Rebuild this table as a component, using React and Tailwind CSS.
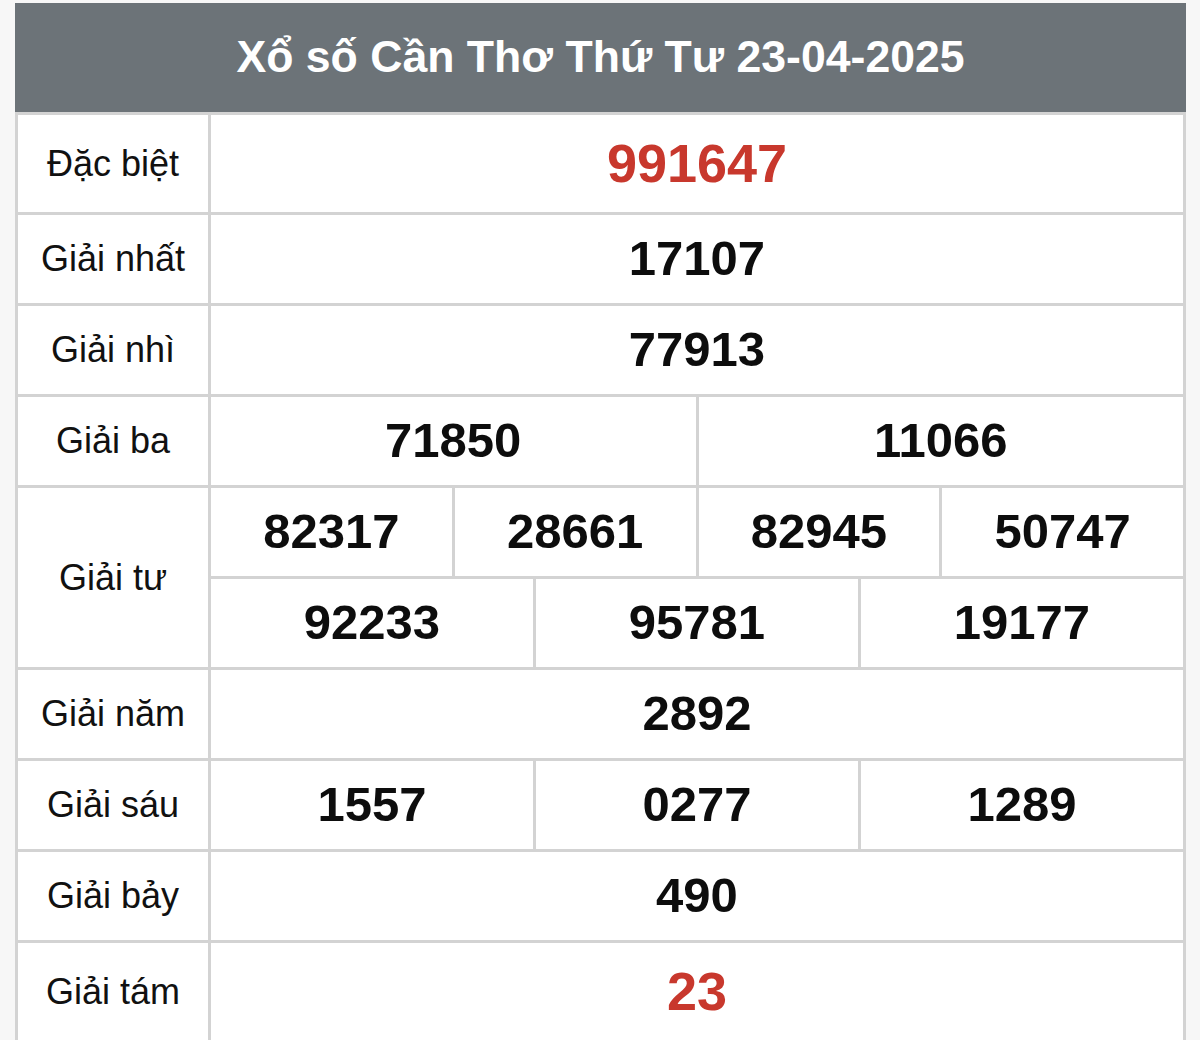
import React from "react";

const font = { fontFamily: '"Liberation Sans", Arial, sans-serif' };

function Label({ children }) {
  return (
    <div className="w-[190px] shrink-0 flex items-center justify-center text-[36px] text-[#111] bg-white">
      {children}
    </div>
  );
}

function Num({ children, red, first }) {
  return (
    <div
      className={
        "flex-1 flex items-center justify-center font-bold bg-white " +
        (first ? "" : "border-l-[3px] border-[#d3d3d3] ") +
        (red ? "text-[54px] text-[#c8382d]" : "text-[49px] text-[#0d0d0d]")
      }
    >
      {children}
    </div>
  );
}

function Row({ label, nums, red, tall }) {
  return (
    <div className={"flex border-t-[3px] border-[#d3d3d3] " + (tall ? "h-[100px]" : "h-[91px]")}>
      <Label>{label}</Label>
      <div className="flex-1 flex border-l-[3px] border-[#d3d3d3]">
        {nums.map((n, i) => (
          <Num key={i} red={red} first={i === 0}>
            {n}
          </Num>
        ))}
      </div>
    </div>
  );
}

export default function App() {
  return (
    <div className="w-[1200px] h-[1040px] overflow-hidden bg-[#f7f7f7] pt-[3px] pl-[15px]" style={font}>
      <div className="w-[1171px]">
        <div className="h-[109px] bg-[#6c7378] flex items-center justify-center text-white font-bold text-[44.6px]">
          Xổ số Cần Thơ Thứ Tư 23-04-2025
        </div>
        <div className="border-l-[3px] border-r-[3px] border-[#d3d3d3] bg-white">
          <Row label="Đặc biệt" nums={["991647"]} red tall />
          <Row label="Giải nhất" nums={["17107"]} />
          <Row label="Giải nhì" nums={["77913"]} />
          <Row label="Giải ba" nums={["71850", "11066"]} />
          <div className="flex border-t-[3px] border-[#d3d3d3] h-[182px]">
            <Label>Giải tư</Label>
            <div className="flex-1 flex flex-col border-l-[3px] border-[#d3d3d3]">
              <div className="flex h-[88px]">
                {["82317", "28661", "82945", "50747"].map((n, i) => (
                  <Num key={i} first={i === 0}>{n}</Num>
                ))}
              </div>
              <div className="flex flex-1 border-t-[3px] border-[#d3d3d3]">
                {["92233", "95781", "19177"].map((n, i) => (
                  <Num key={i} first={i === 0}>{n}</Num>
                ))}
              </div>
            </div>
          </div>
          <Row label="Giải năm" nums={["2892"]} />
          <Row label="Giải sáu" nums={["1557", "0277", "1289"]} />
          <Row label="Giải bảy" nums={["490"]} />
          <Row label="Giải tám" nums={["23"]} red tall />
        </div>
      </div>
    </div>
  );
}
